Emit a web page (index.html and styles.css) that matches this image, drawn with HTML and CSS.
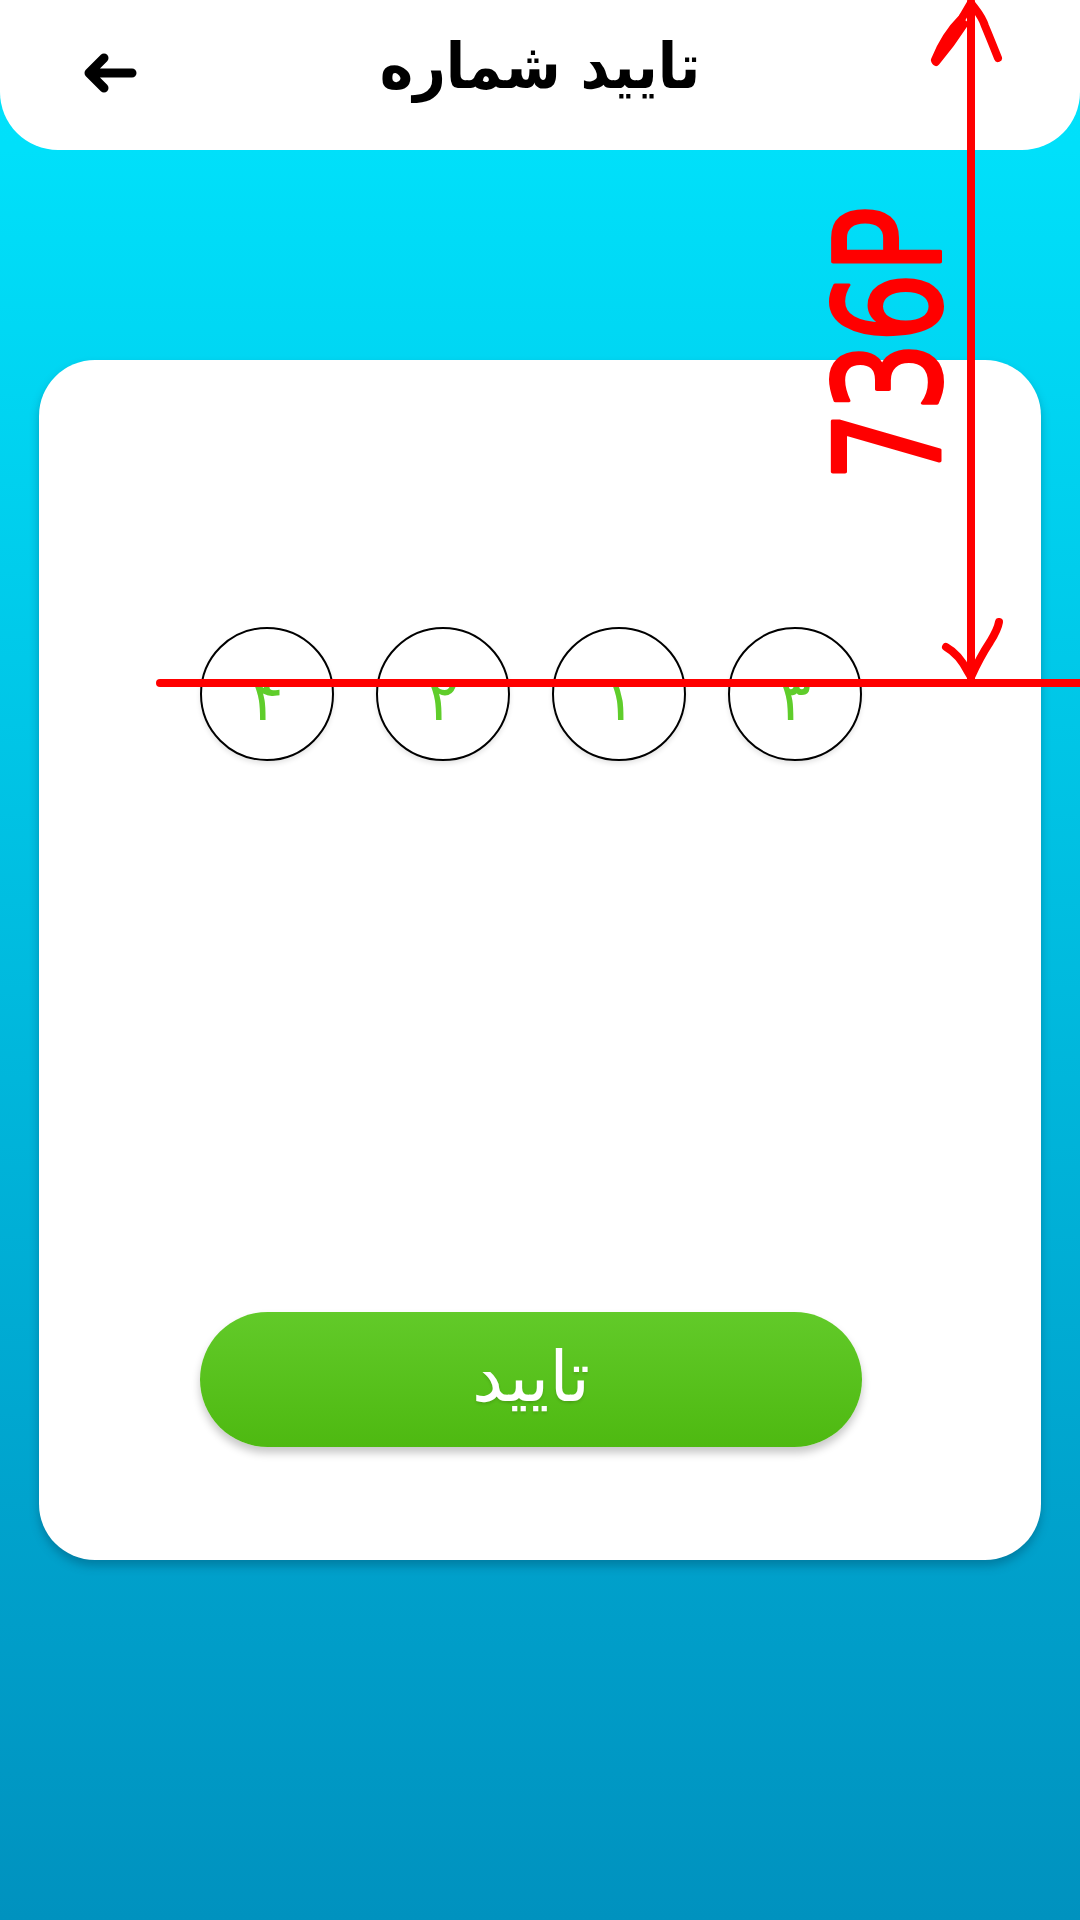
FILE: index.html
```html
<!DOCTYPE html>
<html lang="fa">
<head>
<meta charset="utf-8">
<title>تایید شماره</title>
<link rel="stylesheet" href="styles.css">
</head>
<body>
<header class="topbar">
  <div class="back">
    <svg class="back-icon" viewBox="0 0 54 40" width="54" height="40">
      <path d="M49 20 H6 M21 5 L6 20 L21 35" fill="none" stroke="#000" stroke-width="9" stroke-linecap="round" stroke-linejoin="round"/>
    </svg>
  </div>
  <h1 class="title" dir="rtl">تایید شماره</h1>
  <div class="spacer"></div>
</header>

<main class="page">
  <section class="card">
    <div class="content">
      <div class="code-row">
        <div class="digit">۴</div>
        <div class="digit">۲</div>
        <div class="digit">۱</div>
        <div class="digit">۳</div>
      </div>
      <button class="confirm" dir="rtl">تایید</button>
    </div>
  </section>
</main>

<svg class="annotation" width="1080" height="720" viewBox="0 0 1080 720">
  <g fill="none" stroke="#ff0000" stroke-width="8" stroke-linecap="round" stroke-linejoin="round">
    <path d="M971 2 L971 682"/>
    <path d="M160 683 L1080 683"/>
    <path d="M935 60 C942 42 952 28 962 18 C966 12 969 6 971 3 C976 10 982 16 985 26 C990 38 994 48 998 58"/>
    <path d="M936 62 C946 50 955 38 964 24"/>
    <path d="M946 647 C955 652 962 660 968 672 L971 677 C976 666 982 654 990 642 C995 634 998 628 999 622"/>
  </g>
  <text class="anno-text" transform="translate(940,481) rotate(-90)" x="0" y="0" textLength="274" lengthAdjust="spacingAndGlyphs">736P</text>
</svg>
</body>
</html>
```

FILE: styles.css
```css
html, body {
  margin: 0;
  padding: 0;
}

body {
  width: 1080px;
  height: 1920px;
  position: relative;
  overflow: hidden;
  background: linear-gradient(180deg, #00e1fb 0px, #00e0fa 150px, #00bee1 900px, #00a3cd 1500px, #0092bf 1920px);
  font-family: "DejaVu Sans", "Noto Sans", sans-serif;
}

.topbar {
  height: 150px;
  background: #ffffff;
  border-radius: 0 0 58px 58px;
  display: grid;
  grid-template-columns: 1fr auto 1fr;
  align-items: center;
  box-sizing: border-box;
  padding: 0 83px 10px 83px;
}

.back {
  display: flex;
  align-items: center;
  padding-top: 6px;
}

.back-icon {
  display: block;
}

.title {
  margin: 0 0 8px 0;
  font-family: "DejaVu Sans Condensed", "DejaVu Sans", sans-serif;
  font-weight: bold;
  font-size: 63px;
  line-height: 1;
  color: #000;
  text-align: center;
}

.page {
  padding: 210px 39px 0 39px;
}

.card {
  height: 1200px;
  background: #ffffff;
  border-radius: 56px;
  box-shadow: 0 6px 10px rgba(0, 60, 90, 0.35);
  box-sizing: border-box;
  padding: 267px 179px 0 161px;
}

.content {
  display: flex;
  flex-direction: column;
  align-items: stretch;
}

.code-row {
  display: flex;
  justify-content: center;
  gap: 42px;
  direction: ltr;
}

.digit {
  width: 134px;
  height: 134px;
  box-sizing: border-box;
  border: 2px solid #000;
  border-radius: 50%;
  display: flex;
  align-items: center;
  justify-content: center;
  color: #5fcd2b;
  font-family: "DejaVu Sans", sans-serif;
  font-size: 62px;
  line-height: 1;
  padding-top: 10px;
  box-shadow: 0 3px 5px rgba(0, 0, 0, 0.1);
}

.confirm {
  margin-top: 551px;
  height: 135px;
  border: none;
  border-radius: 68px;
  background: linear-gradient(180deg, #62ca29 0%, #4eb911 100%);
  box-shadow: 0 6px 8px rgba(0, 0, 0, 0.22);
  color: #ffffff;
  font-family: "DejaVu Sans", sans-serif;
  font-size: 70px;
  line-height: 1;
  padding: 0 0 6px 0;
  text-shadow: 0 2px 3px rgba(0, 0, 0, 0.12);
}

.annotation {
  position: absolute;
  left: 0;
  top: 0;
  pointer-events: none;
}

.anno-text {
  fill: #ff0000;
  stroke: #ff0000;
  stroke-width: 4px;
  stroke-linejoin: round;
  font-family: "DejaVu Sans", sans-serif;
  font-weight: normal;
  font-size: 146px;
}
```
